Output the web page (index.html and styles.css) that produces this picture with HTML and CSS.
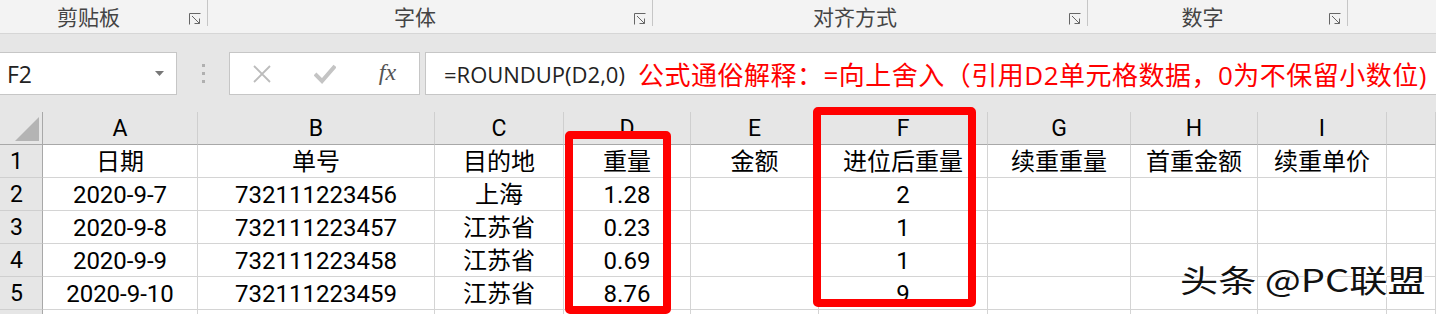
FILE: index.html
```html
<!DOCTYPE html>
<html>
<head>
  <title>ROUNDUP</title>
  <link rel="stylesheet" href="styles.css">
</head>
<body>
  <div class="ribbon">
    <div class="group group-clip">
      <div class="group-label">剪贴板</div>
      <svg class="launcher" width="12" height="12" viewBox="0 0 12 12"><path d="M0.5 11.5V0.5H11.5M3 3L10.5 10.5M10.5 5.5V10.5H5.5" fill="none" stroke="#666" stroke-width="1"/></svg>
      <div class="group-sep"></div>
    </div>
    <div class="group group-font">
      <div class="group-label">字体</div>
      <svg class="launcher" width="12" height="12" viewBox="0 0 12 12"><path d="M0.5 11.5V0.5H11.5M3 3L10.5 10.5M10.5 5.5V10.5H5.5" fill="none" stroke="#666" stroke-width="1"/></svg>
      <div class="group-sep"></div>
    </div>
    <div class="group group-align">
      <div class="group-label">对齐方式</div>
      <svg class="launcher" width="12" height="12" viewBox="0 0 12 12"><path d="M0.5 11.5V0.5H11.5M3 3L10.5 10.5M10.5 5.5V10.5H5.5" fill="none" stroke="#666" stroke-width="1"/></svg>
      <div class="group-sep"></div>
    </div>
    <div class="group group-number">
      <div class="group-label">数字</div>
      <svg class="launcher" width="12" height="12" viewBox="0 0 12 12"><path d="M0.5 11.5V0.5H11.5M3 3L10.5 10.5M10.5 5.5V10.5H5.5" fill="none" stroke="#666" stroke-width="1"/></svg>
      <div class="group-sep"></div>
    </div>
  </div>

  <div class="formula-bar">
    <div class="name-box">
      <span>F2</span>
      <svg width="9" height="5" viewBox="0 0 9 5"><path d="M0 0H9L4.5 5Z" fill="#777"/></svg>
    </div>
    <div class="grip"><i></i><i></i><i></i></div>
    <div class="fx-buttons">
      <span class="fx-btn">
        <svg width="20" height="20" viewBox="0 0 20 20"><path d="M2 2L18 18M18 2L2 18" stroke="#bcbcbc" stroke-width="1.8" fill="none"/></svg>
      </span>
      <span class="fx-btn">
        <svg width="22" height="20" viewBox="0 0 22 20"><path d="M1 10L8 17L21 2" stroke="#c4c4c4" stroke-width="4" fill="none"/></svg>
      </span>
      <span class="fx-btn fx-label"><i>fx</i></span>
    </div>
    <div class="formula-input">
      <span class="formula">=ROUNDUP(D2,0)</span>
      <span class="note">公式通俗解释：=向上舍入（引用D2单元格数据，0为不保留小数位)</span>
    </div>
  </div>

  <div class="sheet">
    <div class="sheet-row col-heads">
      <div class="corner"><svg width="24" height="24" viewBox="0 0 24 24"><path d="M24 0V24H0Z" fill="#b4b4b4"/></svg></div>
      <div>A</div><div>B</div><div>C</div><div>D</div><div>E</div><div>F</div><div>G</div><div>H</div><div>I</div><div></div>
    </div>
    <div class="sheet-row">
      <div class="row-head">1</div>
      <div>日期</div><div>单号</div><div>目的地</div><div>重量</div><div>金额</div><div>进位后重量</div><div>续重重量</div><div>首重金额</div><div>续重单价</div><div></div>
    </div>
    <div class="sheet-row">
      <div class="row-head">2</div>
      <div>2020-9-7</div><div>732111223456</div><div>上海</div><div>1.28</div><div></div><div>2</div><div></div><div></div><div></div><div></div>
    </div>
    <div class="sheet-row">
      <div class="row-head">3</div>
      <div>2020-9-8</div><div>732111223457</div><div>江苏省</div><div>0.23</div><div></div><div>1</div><div></div><div></div><div></div><div></div>
    </div>
    <div class="sheet-row">
      <div class="row-head">4</div>
      <div>2020-9-9</div><div>732111223458</div><div>江苏省</div><div>0.69</div><div></div><div>1</div><div></div><div></div><div></div><div></div>
    </div>
    <div class="sheet-row">
      <div class="row-head">5</div>
      <div>2020-9-10</div><div>732111223459</div><div>江苏省</div><div>8.76</div><div></div><div>9</div><div></div><div></div><div></div><div></div>
    </div>
    <div class="sheet-row">
      <div class="row-head"></div>
      <div></div><div></div><div></div><div></div><div></div><div></div><div></div><div></div><div></div><div></div>
    </div>
  </div>

  <div class="mark mark-d"></div>
  <div class="mark mark-f"></div>
  <div class="watermark">头条 @PC联盟</div>
</body>
</html>
```

FILE: styles.css
```css
body {
  margin: 0;
  width: 1436px;
  height: 314px;
  overflow: hidden;
  position: relative;
  background-color: #fff;
  font-family: Roboto, "Noto Sans CJK SC", sans-serif;
  color: #000;
}

/* ribbon group labels */
.ribbon {
  display: flex;
  height: 33px;
  background-color: #f3f3f3;
  border-bottom: 1px solid #d6d6d6;
}

.group {
  display: flex;
  align-items: flex-start;
}

.group-clip { width: 208px; }
.group-font { width: 445px; }
.group-align { width: 435px; }
.group-number { width: 260px; }

.group-label {
  flex: 1;
  text-align: center;
  padding-right: 12px;
  font-family: "Noto Sans CJK SC", sans-serif;
  font-size: 21px;
  line-height: 33px;
  color: #444;
}

.launcher {
  margin-top: 13px;
  margin-right: 6px;
}

.group-sep {
  width: 1px;
  height: 26px;
  background-color: #c6c6c6;
}

/* name box + formula */
.formula-bar {
  display: flex;
  align-items: flex-start;
  height: 78px;
  padding-top: 18px;
  box-sizing: border-box;
  background-color: #e6e6e6;
}

.name-box {
  width: 177px;
  height: 43px;
  box-sizing: border-box;
  display: flex;
  align-items: center;
  justify-content: space-between;
  padding: 0 12px 0 7px;
  background-color: #fff;
  border: 1px solid #c6c6c6;
  border-left: none;
  font-family: "Open Sans", sans-serif;
  font-size: 23px;
  color: #222;
}

.grip {
  width: 52px;
  height: 43px;
  display: flex;
  flex-direction: column;
  align-items: center;
  justify-content: center;
  gap: 5px;
}

.grip i {
  width: 3px;
  height: 3px;
  background-color: #b0b0b0;
}

.fx-buttons {
  width: 191px;
  height: 43px;
  box-sizing: border-box;
  display: flex;
  background-color: #fff;
  border: 1px solid #c6c6c6;
}

.fx-btn {
  width: 63px;
  display: flex;
  align-items: center;
  justify-content: center;
}

.fx-label {
  font-family: "Liberation Serif", serif;
  font-size: 24px;
  color: #555;
  padding-bottom: 3px;
}

.formula-input {
  flex: 1;
  margin-left: 5px;
  margin-right: -2px;
  height: 43px;
  box-sizing: border-box;
  display: flex;
  align-items: center;
  gap: 13px;
  padding-left: 18px;
  background-color: #fff;
  border: 1px solid #c6c6c6;
  white-space: nowrap;
  overflow: hidden;
}

.formula {
  font-family: "Open Sans", sans-serif;
  font-size: 22px;
  color: #222;
}

.note {
  font-family: "Open Sans", "Noto Sans CJK SC", sans-serif;
  font-size: 26px;
  letter-spacing: 0.5px;
  color: #ff0000;
}

/* grid */
.sheet-row {
  display: grid;
  grid-template-columns: 43px 155px 237px 129px 127px 128px 169px 143px 127px 129px 49px;
  height: 33px;
}

.sheet-row > div {
  box-sizing: border-box;
  border-right: 1px solid #d4d4d4;
  border-bottom: 1px solid #d4d4d4;
  text-align: center;
  font-size: 24px;
  line-height: 34px;
  white-space: nowrap;
  overflow: hidden;
}

.col-heads > div {
  background-color: #e6e6e6;
  border-right-color: #cfcfcf;
  border-bottom-color: #a8a8a8;
  font-size: 23px;
  line-height: 33px;
}

.sheet-row > .row-head {
  background-color: #e6e6e6;
  border-right-color: #a8a8a8;
  border-bottom-color: #cfcfcf;
  padding-right: 9px;
  font-size: 23px;
}

.col-heads > .corner {
  border-right-color: #a8a8a8;
  display: flex;
  align-items: flex-start;
  padding: 5px 0 0 15px;
}

/* red highlight boxes drawn over the sheet */
.mark {
  position: absolute;
  border: 8px solid #ff0000;
  border-radius: 5px;
  box-sizing: border-box;
}

.mark-d {
  left: 565px;
  top: 131px;
  width: 106px;
  height: 183px;
}

.mark-f {
  left: 813px;
  top: 107px;
  width: 163px;
  height: 200px;
}

.watermark {
  position: absolute;
  left: 1180px;
  top: 259px;
  font-family: "Noto Sans CJK SC", sans-serif;
  font-size: 31px;
  line-height: 40px;
  color: #111;
  text-shadow: 2px 2px 0 #fff, -1px -1px 0 rgba(255, 255, 255, 0.8);
  transform: scaleX(1.23);
  transform-origin: left center;
  white-space: nowrap;
}
```
